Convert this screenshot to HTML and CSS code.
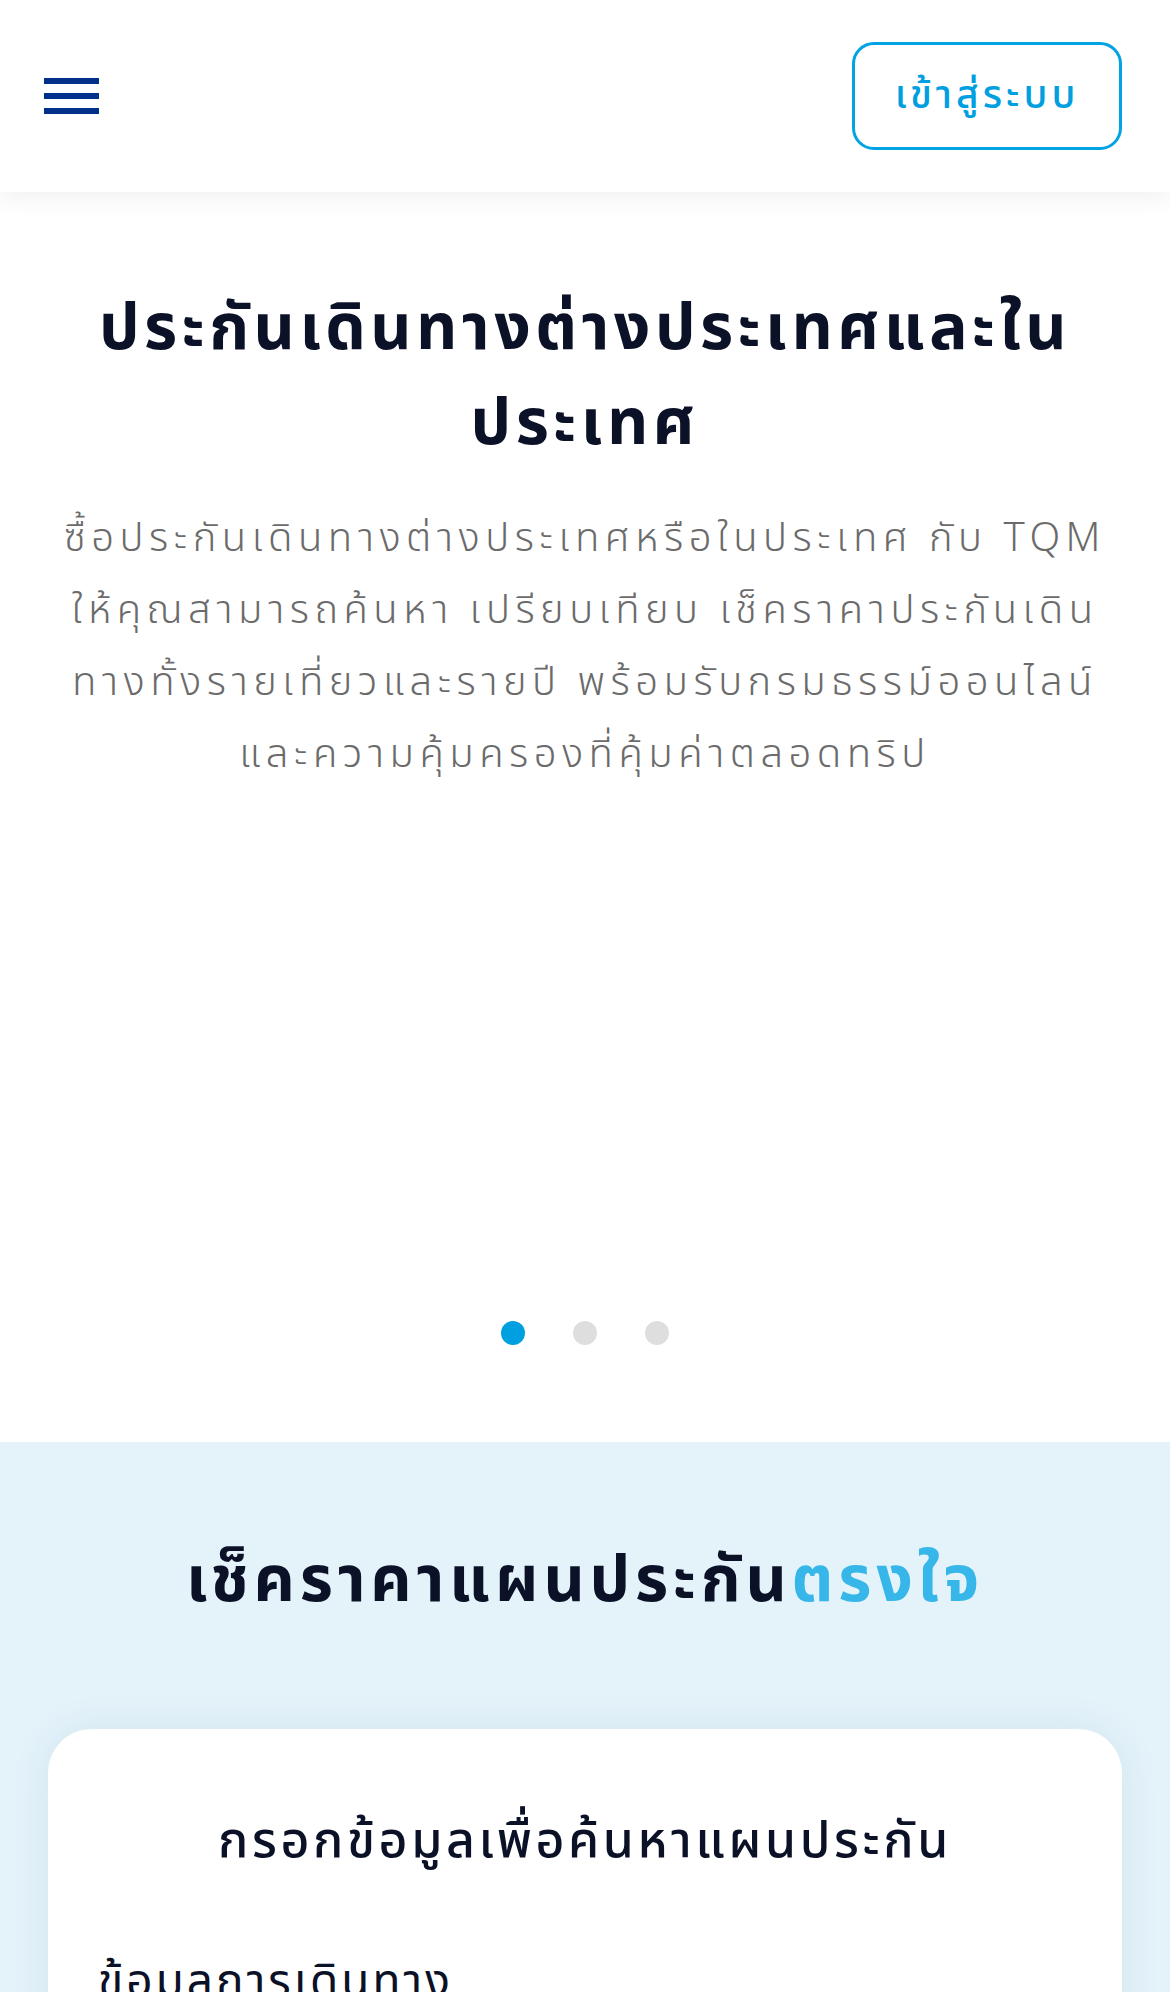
FILE: index.html
```html
<!DOCTYPE html>
<html lang="th">
<head>
<meta charset="utf-8">
<title>ประกันเดินทาง</title>
<link rel="stylesheet" href="styles.css">
</head>
<body>
<header class="topbar">
  <button class="menu" aria-label="menu">
    <span></span><span></span><span></span>
  </button>
  <a class="login" href="#">เข้าสู่ระบบ</a>
</header>
<section class="hero">
  <h1 class="hero-title">ประกันเดินทางต่างประเทศและใน<br>ประเทศ</h1>
  <p class="hero-text">ซื้อประกันเดินทางต่างประเทศหรือในประเทศ กับ TQM<br>ให้คุณสามารถค้นหา เปรียบเทียบ เช็คราคาประกันเดิน<br>ทางทั้งรายเที่ยวและรายปี พร้อมรับกรมธรรม์ออนไลน์<br>และความคุ้มครองที่คุ้มค่าตลอดทริป</p>
  <div class="slide-space"></div>
  <div class="dots">
    <span class="dot active"></span><span class="dot"></span><span class="dot"></span>
  </div>
</section>
<section class="check">
  <h2 class="check-title">เช็คราคาแผนประกัน<span class="accent">ตรงใจ</span></h2>
  <div class="card">
    <h3 class="card-title">กรอกข้อมูลเพื่อค้นหาแผนประกัน</h3>
    <div class="card-label">ข้อมูลการเดินทาง</div>
  </div>
</section>
</body>
</html>
```
FILE: styles.css
```css
* { box-sizing: border-box; }
html, body { margin: 0; padding: 0; }
body {
  font-family: "Noto Sans Thai", "Noto Sans", sans-serif;
  background: #fff;
  color: #0b1126;
  width: 1170px;
  overflow: hidden;
}
.topbar {
  height: 192px;
  display: flex;
  align-items: center;
  justify-content: space-between;
  padding: 0 48px 0 44px;
  background: #fff;
  box-shadow: 0 6px 24px rgba(0,0,0,0.06);
  position: relative;
  z-index: 2;
}
.menu {
  width: 55px;
  height: 36px;
  padding: 0;
  border: 0;
  background: none;
  display: flex;
  flex-direction: column;
  justify-content: space-between;
}
.menu span {
  display: block;
  height: 6px;
  width: 55px;
  background: #00318a;
}
.login {
  width: 270px;
  height: 108px;
  border: 3px solid #00a3e3;
  border-radius: 22px;
  display: flex;
  align-items: center;
  justify-content: center;
  color: #009fe0;
  font-size: 39px;
  letter-spacing: 4px;
  font-weight: 500;
  text-decoration: none;
}
.hero {
  padding: 90px 20px 0;
  text-align: center;
}
.hero-title {
  margin: 0;
  font-size: 64px;
  line-height: 95px;
  letter-spacing: 4.5px;
  font-weight: 700;
  color: #0b1126;
}
.hero-text {
  margin: 31px 0 0;
  font-size: 40px;
  line-height: 72px;
  letter-spacing: 5.5px;
  font-weight: 300;
  color: #6b6b6b;
  white-space: nowrap;
}
.slide-space { height: 530px; }
.dots {
  display: flex;
  justify-content: center;
  gap: 48px;
  padding-bottom: 97px;
}
.dot {
  width: 24px;
  height: 24px;
  border-radius: 50%;
  background: #dedede;
}
.dot.active { background: #00a0e0; }
.check {
  background: #e4f3fa;
  padding: 95px 48px 0;
}
.check-title {
  margin: 0;
  text-align: center;
  font-size: 64px;
  line-height: 90px;
  letter-spacing: 4.8px;
  font-weight: 700;
  color: #0b1126;
}
.accent { color: #36b6e9; }
.card {
  margin-top: 102px;
  background: #fff;
  border-radius: 44px;
  box-shadow: 0 0 40px rgba(0, 60, 110, 0.08);
  padding: 78px 50px 40px;
  height: 400px;
}
.card-title {
  margin: 0;
  text-align: center;
  font-size: 50px;
  font-weight: 500;
  letter-spacing: 3.6px;
  line-height: 70px;
}
.card-label {
  margin-top: 76px;
  font-size: 46px;
  letter-spacing: 3px;
  line-height: 60px;
  color: #0b1126;
}
```
